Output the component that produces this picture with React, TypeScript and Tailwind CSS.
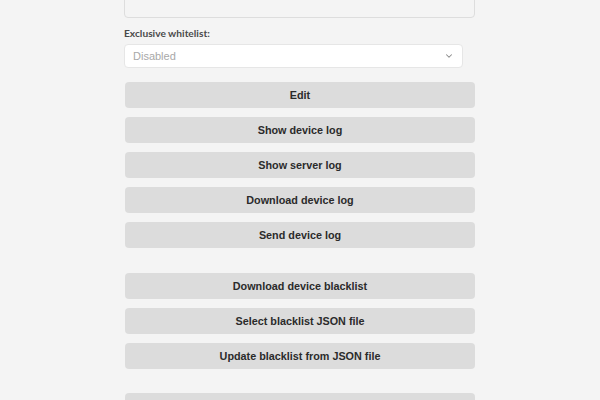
import React from 'react';
import { ChevronDown } from 'lucide-react';

const logButtons = [
  'Edit',
  'Show device log',
  'Show server log',
  'Download device log',
  'Send device log',
];

const blacklistButtons = [
  'Download device blacklist',
  'Select blacklist JSON file',
  'Update blacklist from JSON file',
];

const ActionButton: React.FC<{ label: string }> = ({ label }) => (
  <button
    type="button"
    className="w-full h-[26px] shrink-0 rounded-[4px] bg-[#dcdcdc] text-[#2b2b2b] text-[10.8px] font-bold font-['Liberation_Sans',Arial,sans-serif] flex items-center justify-center"
  >
    {label}
  </button>
);

export default function App() {
  return (
    <div className="w-[600px] h-[400px] overflow-hidden bg-[#f4f4f4] font-['Liberation_Sans',Arial,sans-serif]">
      <div className="w-[351px] ml-[124px] -mt-[20px] flex flex-col">
        {/* notes textarea (scrolled mostly out of view) */}
        <div className="h-[38px] rounded-[4px] border border-[#dddddd] bg-[#f4f4f4]" />

        <label className="block mt-[8px] text-[10.2px] font-bold text-[#4a4a4a] font-['Lato',sans-serif] leading-[14px]">
          Exclusive whitelist:
        </label>

        {/* select */}
        <div className="mt-[4px] w-[339px] h-[24px] rounded-[4px] border border-[#e6e6e6] bg-white flex items-center justify-between pl-[8px] pr-[8px]">
          <span className="text-[11px] text-[#a8a8a8]">Disabled</span>
          <ChevronDown className="w-[10px] h-[10px] text-[#888]" strokeWidth={2.5} />
        </div>

        <div className="mt-[14px] pl-px flex flex-col gap-[9px]">
          {logButtons.map((b) => (
            <ActionButton key={b} label={b} />
          ))}
        </div>

        <div className="mt-[25px] pl-px flex flex-col gap-[9px]">
          {blacklistButtons.map((b) => (
            <ActionButton key={b} label={b} />
          ))}
        </div>

        <div className="mt-[24px] pl-px">
          <ActionButton label="" />
        </div>
      </div>
    </div>
  );
}
